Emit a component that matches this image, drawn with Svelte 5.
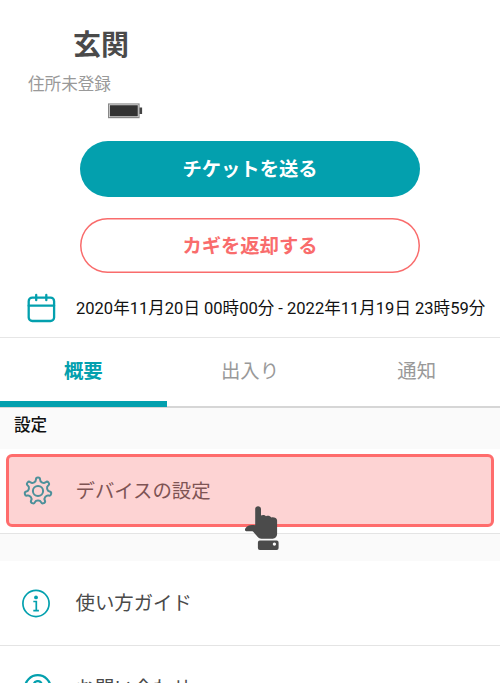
<script>
    let activeTab = 0;

    const tabs = ['概要', '出入り', '通知'];

    /**
     * Outline of the cog: two outer and two inner
     * points per tooth, with rounded corners
     */
    function gearPath(teeth, outer, inner) {
        const step = (Math.PI * 2) / teeth;
        const points = [];

        for(let i = 0; i < teeth; i++) {
            const a = i * step - Math.PI / 2;
            [[-0.24, inner], [-0.17, outer], [0.17, outer], [0.24, inner]].forEach(([offset, r]) => {
                points.push([Math.cos(a + offset * step) * r, Math.sin(a + offset * step) * r]);
            });
        }

        return points.map((p, i) => {
            const prev = points[(i + points.length - 1) % points.length];
            const next = points[(i + 1) % points.length];
            const from = near(p, prev);
            const to = near(p, next);
            return `${i ? 'L' : 'M'}${from}Q${p.map(n => n.toFixed(2))} ${to}`;
        }).join('') + 'Z';
    }

    function near(p, q) {
        const length = Math.hypot(q[0] - p[0], q[1] - p[1]);
        const t = Math.min(1.9 / length, 0.5);
        return [p[0] + (q[0] - p[0]) * t, p[1] + (q[1] - p[1]) * t].map(n => n.toFixed(2));
    }

    const gear = gearPath(7, 13.6, 9.7);
</script>

<main class="screen">
    <header>
        <h1>玄関</h1>
        <p class="address">住所未登録</p>
        <svg class="battery" width="35" height="16" viewBox="0 0 35 16">
            <rect x=".6" y="1" width="30.4" height="13.6" fill="#fff" stroke="#888" stroke-width="1.2" />
            <rect x="1.8" y="2.2" width="28" height="11.2" fill="#333" />
            <rect x="31.5" y="4.5" width="2.6" height="6.5" fill="#444" />
        </svg>
    </header>

    <div class="actions">
        <button class="send">チケットを送る</button>
        <button class="return">カギを返却する</button>
    </div>

    <div class="period">
        <svg width="30" height="30" viewBox="0 0 30 30" fill="none" stroke="#03a0ae" stroke-width="2.3" stroke-linecap="round">
            <rect x="2.7" y="4.6" width="25.4" height="23.4" rx="3.6" />
            <path d="M2.7 12.7h25.4M10.2 2v5.2M20.3 2v5.2" />
        </svg>
        <span>2020年11月20日 00時00分 - 2022年11月19日 23時59分</span>
    </div>

    <nav>
        {#each tabs as tab, i}
            <button class="tab" class:active={activeTab === i} on:click={_ => activeTab = i}>{tab}</button>
        {/each}
    </nav>

    <h2>設定</h2>

    <div class="row device">
        <svg class="icon" width="30" height="30" viewBox="-15 -15 30 30" fill="none" stroke="#03a0ae" stroke-width="2">
            <path d={gear} />
            <circle r="5.1" />
        </svg>
        <span>デバイスの設定</span>
        <div class="highlight"></div>
        <svg class="hand" width="35" height="46" viewBox="0 0 35 46" fill="#4b4b4b">
            <path d="M10.2 2.8C10.2-.8 16-.7 16 2.9V9.500c1.500-1 3.900-.8 5 .8 1.700-.9 4.200-.5 5.200 1.100 2.500-.5 5.900.3 5.900 3.200V28c0 2.700-1.800 4.700-4.400 4.700H16.500c-2 0-3.400-1.200-4.800-3l-3.500-3.900C7 24.600 5 25.600 1.200 25.200-.3 25-.3 23.100.6 22 2.500 19.500 5.200 18.300 10.200 19.300Z" />
            <path fill-rule="evenodd" d="M14.800 34.500h16.900q1.900 0 1.900 1.900v5.700q0 1.900-1.900 1.900H14.800q-1.900 0-1.900-1.900v-5.700q0-1.900 1.900-1.900Zm14.600 2a1.600 1.600 0 1 0 .01 0Z" />
        </svg>
    </div>

    <div class="gap"></div>

    <div class="row">
        <svg class="icon info" width="30" height="30" viewBox="0 0 30 30" fill="none" stroke="#03a0ae" stroke-width="1.7">
            <circle cx="15" cy="15.500" r="13.100" />
            <circle cx="15" cy="9.400" r="1.900" fill="#03a0ae" stroke="none" />
            <path d="M12.300 13.500h3v9M12.300 22.700h5.600" />
        </svg>
        <span>使い方ガイド</span>
    </div>

    <div class="row">
        <svg class="icon" width="30" height="30" viewBox="0 0 30 30" fill="none" stroke="#03a0ae" stroke-width="2.300">
            <circle cx="14.800" cy="15" r="12.800" />
            <path d="M10.800 12.200a4 4 0 1 1 5.800 3.500q-1.800 1-1.800 3M14.800 20.500v2" />
        </svg>
        <span>お問い合わせ</span>
    </div>
</main>

<style>
:global(body) {
    overflow: hidden;
    background: #fff;
}

.screen {
    box-sizing: border-box;
    width: 500px;
    height: 683px;
    overflow: hidden;
    color: #4a4a4a;
    font-family: Roboto, "Noto Sans CJK JP", sans-serif;
}

button {
    padding: 0;
    border: none;
    background: none;
    font-family: inherit;
}

/* header */
header {
    height: 141px;
    overflow: hidden;
}

h1 {
    margin: 25px 0 0 73px;
    font-size: 28px;
    line-height: 42px;
    font-weight: 700;
}

.address {
    margin: 6px 0 0 28px;
    color: #999;
    font-size: 16.6px;
    line-height: 24px;
}

.battery {
    display: block;
    margin: 6px 0 0 107.5px;
}

/* actions */
.actions {
    display: flex;
    flex-direction: column;
    align-items: center;
    gap: 21px;
}

.actions button {
    box-sizing: border-box;
    width: 340px;
    height: 55.5px;
    padding-bottom: 1px;
    border-radius: 28px;
    font-size: 19.3px;
    font-weight: 700;
}

.send {
    background: #03a0ae;
    color: #fff;
}

.actions .return {
    box-shadow: inset 0 0 0 1.5px #f96c6c;
    color: #f96c6c;
}

/* period */
.period {
    display: flex;
    align-items: center;
    gap: 20px;
    box-sizing: border-box;
    height: 64px;
    padding: 6px 0 0 26px;
    color: #111;
    font-size: 16.55px;
    white-space: nowrap;
}

.period span {
    padding-bottom: 2px;
}

/* tabs */
nav {
    display: grid;
    grid-template-columns: repeat(3, 1fr);
    box-sizing: border-box;
    height: 71px;
    border-top: 1px solid #e6e6e6;
    border-bottom: 2px solid #d6d6d6;
}

.tab {
    padding-bottom: 5px;
    color: #999;
    font-size: 19.4px;
}

.tab.active {
    padding-bottom: 0;
    margin-bottom: -1px;
    border-bottom: 6px solid #03a0ae;
    color: #03a0ae;
    font-weight: 700;
}

/* list */
h2 {
    box-sizing: border-box;
    height: 41px;
    margin: 0;
    padding: 6px 14px 0;
    background: #fafafa;
    color: #111;
    font-size: 16.6px;
    line-height: 24px;
    font-weight: 500;
}

.row {
    position: relative;
    display: flex;
    align-items: center;
    gap: 23px;
    box-sizing: border-box;
    height: 85px;
    padding-left: 22.5px;
    border-bottom: 1px solid #e4e4e4;
    font-size: 19.4px;
}

.row span {
    padding-bottom: 3px;
}

.info {
    margin: 0 2px 0 -2px;
}

.gap {
    height: 27px;
    background: #fafafa;
}

.highlight {
    position: absolute;
    top: 5px;
    left: 6px;
    right: 6px;
    box-sizing: border-box;
    height: 73px;
    border: 3px solid #ff6c6c;
    border-radius: 6px;
    background: rgba(248, 108, 108, .3);
}

.hand {
    position: absolute;
    top: 57px;
    left: 245px;
}
</style>
